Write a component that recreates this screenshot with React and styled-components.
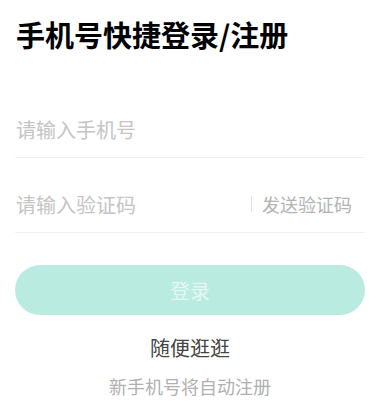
import React, { useState } from 'react';
import styled, { createGlobalStyle } from 'styled-components';

const GlobalStyle = createGlobalStyle`
  html, body {
    margin: 0;
    padding: 0;
    background: #fff;
  }
  body {
    font-family: "Noto Sans CJK SC", "Noto Sans", sans-serif;
  }
`;

const Page = styled.div`
  display: flex;
  flex-direction: column;
  padding: 14px 15px 0;
`;

const Title = styled.h1`
  margin: 0 0 0 1px;
  font-size: 29px;
  line-height: 40px;
  font-weight: 700;
  color: #000;
`;

const Form = styled.div`
  display: flex;
  flex-direction: column;
  margin-top: 47px;
`;

const Row = styled.div`
  display: flex;
  align-items: center;
  height: 56px;
  margin-top: ${(p) => (p.first ? 0 : '18px')};
  border-bottom: 1px solid #f0f0f0;
`;

const Field = styled.input`
  flex: 1;
  min-width: 0;
  border: none;
  outline: none;
  padding: 0 0 0 1px;
  background: transparent;
  font-family: inherit;
  font-size: 20px;
  color: #333;

  &::placeholder {
    color: #c4c4c4;
  }
`;

const SendCode = styled.span`
  display: flex;
  align-items: center;
  gap: 10px;
  padding-right: 13px;
  font-size: 18px;
  color: #b3b3b3;

  &::before {
    content: '';
    width: 1px;
    height: 16px;
    background: #e4e4e4;
  }
`;

const LoginButton = styled.button`
  margin-top: 32px;
  height: 50px;
  border: none;
  border-radius: 25px;
  background: #b9ebe0;
  color: rgba(255, 255, 255, 0.65);
  font-family: inherit;
  font-size: 20px;
`;

const Stroll = styled.div`
  margin-top: 19px;
  text-align: center;
  font-size: 20px;
  line-height: 28px;
  color: #444;
`;

const Hint = styled.div`
  margin-top: 11px;
  text-align: center;
  font-size: 18px;
  line-height: 26px;
  color: #b0b0b0;
`;

const App = () => {
  const [phone, setPhone] = useState('');
  const [code, setCode] = useState('');

  return (
    <Page>
      <GlobalStyle />
      <Title>手机号快捷登录/注册</Title>
      <Form>
        <Row first>
          <Field
            value={phone}
            onChange={(e) => setPhone(e.target.value)}
            placeholder="请输入手机号"
          />
        </Row>
        <Row>
          <Field
            value={code}
            onChange={(e) => setCode(e.target.value)}
            placeholder="请输入验证码"
          />
          <SendCode>发送验证码</SendCode>
        </Row>
      </Form>
      <LoginButton>登录</LoginButton>
      <Stroll>随便逛逛</Stroll>
      <Hint>新手机号将自动注册</Hint>
    </Page>
  );
};

export default App;
